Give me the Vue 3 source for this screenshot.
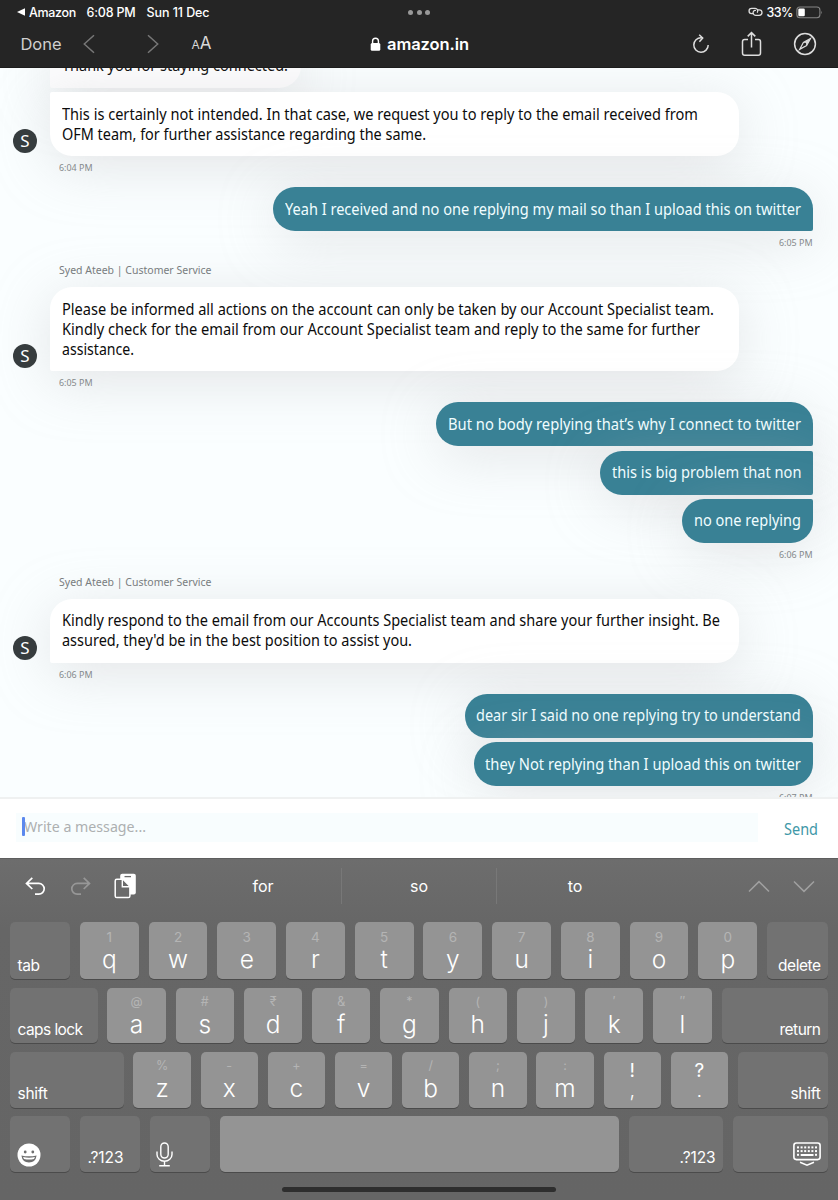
<script setup>
// Makes a line take the given width, by letter spacing or (.squeeze) by narrowing the glyphs.
const vFit = {
  mounted(el, { value, modifiers }) {
    if (!value) return
    const natural = el.getBoundingClientRect().width
    if (modifiers.squeeze) {
      el.style.transform = `scaleX(${value / natural})`
      el.style.marginRight = value - natural + 'px'
    } else {
      el.style.letterSpacing = (value - natural) / el.textContent.length + 'px'
    }
  },
}

const groups = [
  {
    from: 'agent',
    time: '6:04 PM',
    bubbles: [
      { shape: 'open', w: 251, lines: [['Thank you for staying connected.', 226]] },
      {
        shape: 'last',
        lines: [
          ['This is certainly not intended. In that case, we request you to reply to the email received from', 636],
          ['OFM team, for further assistance regarding the same.', 364],
        ],
      },
    ],
  },
  {
    from: 'me',
    time: '6:05 PM',
    bubbles: [{ shape: 'first', lines: [['Yeah I received and no one replying my mail so than I upload this on twitter', 516]] }],
  },
  {
    from: 'agent',
    name: 'Syed Ateeb | Customer Service',
    time: '6:05 PM',
    bubbles: [
      {
        shape: 'first',
        lines: [
          ['Please be informed all actions on the account can only be taken by our Account Specialist team.', 652],
          ['Kindly check for the email from our Account Specialist team and reply to the same for further', 638],
          ['assistance.', 72],
        ],
      },
    ],
  },
  {
    from: 'me',
    time: '6:06 PM',
    bubbles: [
      { shape: 'first', lines: [['But no body replying that’s why I connect to twitter', 353]] },
      { shape: 'mid', lines: [['this is big problem that non', 189.5]] },
      { shape: 'last', lines: [['no one replying', 107]] },
    ],
  },
  {
    from: 'agent',
    name: 'Syed Ateeb | Customer Service',
    time: '6:06 PM',
    bubbles: [
      {
        shape: 'first',
        lines: [
          ['Kindly respond to the email from our Accounts Specialist team and share your further insight. Be', 658],
          ["assured, they'd be in the best position to assist you.", 350],
        ],
      },
    ],
  },
  {
    from: 'me',
    time: '6:07 PM',
    bubbles: [
      { shape: 'first', lines: [['dear sir I said no one replying try to understand', 324.6]] },
      { shape: 'last', lines: [['they Not replying than I upload this on twitter', 315.8]] },
    ],
  },
]

const chars = (upper, lower) => [...lower].map((c, i) => ({ sub: [...upper][i], main: c }))
const rows = [
  {
    id: 'r1',
    keys: [{ label: 'tab', w: 60, t: 22 }, ...chars('1234567890', 'qwertyuiop'), { label: 'delete', w: 61, t: 42.5, right: true }],
  },
  {
    id: 'r2',
    keys: [{ label: 'caps lock', w: 87.5, t: 65 }, ...chars('@#₹&*()′″', 'asdfghjkl'), { label: 'return', w: 106.5, t: 41, right: true }],
  },
  {
    id: 'r3',
    keys: [
      { label: 'shift', w: 113.5, t: 30 },
      ...chars('%-+=/;:', 'zxcvbnm'),
      { sub: '!', main: ',', both: true },
      { sub: '?', main: '.', both: true },
      { label: 'shift', w: 90, t: 30, right: true },
    ],
  },
]
const dots = []
for (let r = 0; r < 3; r++)
  for (let c = 0; c < 6; c++) if (r < 2 || c === 0 || c === 5) dots.push([4 + c * 3.6, 4.4 + r * 3.7])
</script>

<template>
  <div class="screen">
    <header>
      <div class="status">
        <svg class="tri" width="8" height="8" viewBox="0 0 8 8"><path d="M0 4 8 .3v7.4z" fill="#fff" /></svg>
        <span v-fit="47" class="s-app">Amazon</span>
        <span v-fit="49" class="s-time">6:08 PM</span>
        <span v-fit="63" class="s-date">Sun 11 Dec</span>
        <span class="dots"><i></i><i></i><i></i></span>
        <svg class="link" width="15" height="10" viewBox="0 0 15 10" fill="none" stroke="#ddd" stroke-width="1.3" stroke-linecap="round">
          <path d="M5.2 6.6H3.7A2.6 2.6 0 0 1 3.7 1.3H7.2A2.6 2.6 0 0 1 9.4 5.2" />
          <path d="M9.6 2.8H11.2A2.8 2.8 0 0 1 11.2 8.4H7.8A2.7 2.7 0 0 1 5.6 4.1Q6.2 3.2 7.4 3.4" />
        </svg>
        <span v-fit="26.5" class="pct">33%</span>
        <svg class="batt" width="27" height="13" viewBox="0 0 27 13">
          <rect x=".9" y="1" width="23" height="10.8" rx="3" fill="none" stroke="#858585" stroke-width="1.1" />
          <rect x="2.3" y="2.5" width="6.5" height="7.8" rx="1.3" fill="#fff" />
          <path d="M25.2 4.7q1.5 1.7 0 3.5z" fill="#858585" />
        </svg>
      </div>
      <div class="toolbar">
        <span v-fit="41" class="done">Done</span>
        <svg class="back" width="12" height="20" viewBox="0 0 12 20"><path d="M11 1.2 1.3 10 11 18.8" /></svg>
        <svg class="fwd" width="12" height="20" viewBox="0 0 12 20"><path d="M1 1.2 10.7 10 1 18.8" /></svg>
        <span class="aa"><small>A</small>A</span>
        <svg class="lock" width="11" height="14" viewBox="0 0 11 14">
          <path d="M2.6 7V4.1a2.9 2.9 0 0 1 5.8 0V7" fill="none" stroke="#fff" stroke-width="1.4" />
          <rect x=".7" y="5.9" width="9.6" height="7.8" rx="1.5" fill="#fff" />
        </svg>
        <span v-fit="82" class="host">amazon.in</span>
        <svg class="reload" width="18" height="20" viewBox="0 0 18 20">
          <path d="M10.2 3.8H9.2A7.2 7.2 0 1 0 16.2 11" />
          <path d="M7.2 .7 10.7 4 7.4 7.7" />
        </svg>
        <svg class="share" width="21" height="26" viewBox="0 0 21 26">
          <path d="M7 8.5H3.7Q1.5 8.5 1.5 10.7V22Q1.5 24.3 3.7 24.3H17.3Q19.5 24.3 19.5 22V10.7Q19.5 8.5 17.3 8.5H14" />
          <path d="M10.5 16.5V1.8M6.7 5.4 10.5 1.6 14.3 5.4" />
        </svg>
        <svg class="compass" width="24" height="24" viewBox="0 0 24 24">
          <circle cx="12" cy="12" r="10.4" />
          <path d="M17.4 6.6 13.6 13.6 6.6 17.4 10.4 10.4z" stroke-width="1.2" />
          <path d="M17.6 6.4 10.4 10.4 13.6 13.6z" fill="#d6d6d6" stroke="none" />
          <circle cx="12" cy="12" r="1.2" fill="#252525" stroke="none" />
        </svg>
      </div>
    </header>

    <main>
      <section v-for="(g, i) in groups" :key="i" :class="['group', g.from]">
        <div v-if="g.name" v-fit.squeeze="152.5" class="name">{{ g.name }}</div>
        <div v-for="(b, j) in g.bubbles" :key="j" class="line">
          <span v-if="g.from === 'agent' && j === g.bubbles.length - 1" class="avatar">S</span>
          <div :class="['bubble', b.shape, { short: b.w }]">
            <div v-for="(l, k) in b.lines" :key="k" class="row"><span v-fit.squeeze="l[1]">{{ l[0] }}</span></div>
          </div>
        </div>
        <div class="time"><span v-fit.squeeze="33.5">{{ g.time }}</span></div>
      </section>
    </main>

    <div class="compose">
      <div class="field"><i class="caret"></i><span v-fit.squeeze="122">Write a message...</span></div>
      <span v-fit.squeeze="34" class="send">Send</span>
    </div>

    <div class="keyboard">
      <div class="suggest">
        <div class="tools">
          <svg width="21" height="21" viewBox="0 0 21 21" stroke="#fff"><path d="M7.3 1.8 1.5 7.4 7.3 13M2 7.4H13.8A5.4 5.4 0 0 1 13.8 18.2H10" /></svg>
          <svg width="21" height="21" viewBox="0 0 21 21" stroke="#979797"><path d="M13.7 1.8 19.5 7.4 13.7 13M19 7.4H7.2A5.4 5.4 0 0 0 7.2 18.2H11" /></svg>
          <svg class="paste" width="23" height="26" viewBox="0 0 23 26">
            <rect x="6.2" y=".8" width="15.6" height="20.6" rx="2" fill="#fff" />
            <path d="M10.5 3.6h6.5" stroke="#6b6b6b" stroke-width="1.3" />
            <path d="M2.8 6.3H9L15.9 13.2V23Q15.9 24.6 14.3 24.6H2.8Q1.2 24.6 1.2 23V7.9Q1.2 6.3 2.8 6.3z" fill="#6b6b6b" stroke="#fff" stroke-width="1.5" />
            <path d="M8.3 6.3V13.8H15.9" fill="none" stroke="#fff" stroke-width="1.4" />
          </svg>
        </div>
        <span class="word">for</span>
        <span class="word mid-word">so</span>
        <span class="word">to</span>
        <div class="nav">
          <svg width="22" height="13" viewBox="0 0 22 13"><path d="M1 11.5 11 1.6 21 11.5" /></svg>
          <svg width="22" height="13" viewBox="0 0 22 13"><path d="M1 1.5 11 11.4 21 1.5" /></svg>
        </div>
      </div>
      <div v-for="r in rows" :key="r.id" :class="['keys', r.id]">
        <div
          v-for="(k, i) in r.keys"
          :key="i"
          :class="['key', { dark: k.label, right: k.right, both: k.both }]"
          :style="k.w ? { flex: '0 0 ' + k.w + 'px' } : null"
        >
          <span v-if="k.label" v-fit="k.t" class="label">{{ k.label }}</span>
          <template v-else><span class="sub">{{ k.sub }}</span><span class="main">{{ k.main }}</span></template>
        </div>
      </div>
      <div class="keys r4">
        <div class="key dark k60">
          <svg class="emoji" width="24" height="24" viewBox="0 0 24 24">
            <circle cx="12" cy="12" r="11.5" fill="#fff" />
            <circle cx="8.2" cy="9" r="1.4" fill="#6e6e6e" /><circle cx="15.8" cy="9" r="1.4" fill="#6e6e6e" />
            <path d="M4.4 12.4Q12 14.3 19.6 12.4 18.6 19.4 12 19.4 5.4 19.4 4.4 12.4z" fill="#6e6e6e" />
            <path d="M6 14Q12 15.4 18 14L17 16Q12 17 7 16z" fill="#fff" />
          </svg>
        </div>
        <div class="key dark k60"><span v-fit="36" class="label">.?123</span></div>
        <div class="key dark k60">
          <svg class="mic" width="17" height="25" viewBox="0 0 17 25" fill="none" stroke="#fff" stroke-width="1.4">
            <rect x="4.8" y="1" width="7.4" height="15" rx="3.7" />
            <path d="M1 9.5V12.5A7.5 6.8 0 0 0 16 12.5V9.5M8.5 19.5V23.8M3.2 23.8H13.8" />
          </svg>
        </div>
        <div class="key space"></div>
        <div class="key dark right k94"><span v-fit="36" class="label">.?123</span></div>
        <div class="key dark right k95">
          <svg class="hide" width="28" height="25" viewBox="0 0 28 25">
            <rect x=".9" y="1" width="26.2" height="16.6" rx="2.5" fill="none" stroke="#fff" stroke-width="1.6" />
            <rect v-for="(d, i) in dots" :key="i" :x="d[0]" :y="d[1]" width="2" height="2" fill="#fff" />
            <rect x="7.7" y="12" width="12.8" height="2" fill="#fff" />
            <path d="M7 20.3 14 23.3 21 20.3" fill="none" stroke="#fff" stroke-width="1.5" />
          </svg>
        </div>
      </div>
      <div class="home"></div>
    </div>
  </div>
</template>

<style>
body { margin: 0; }
</style>

<style scoped>
.screen { width: 838px; height: 1200px; overflow: hidden; display: flex; flex-direction: column; background: #fff; font-family: "Noto Sans", sans-serif; }
.screen * { box-sizing: border-box; }
svg { display: block; flex: none; }
span { white-space: nowrap; flex: none; }
header { position: relative; z-index: 2; height: 68px; flex: none; background: #252525; color: #fff; font-family: Inter, sans-serif; border-bottom: 1px solid #1c1c1c; }
.status { height: 24px; display: flex; align-items: center; font-size: 12.5px; font-weight: 500; padding-left: 16.5px; }
.s-app { margin-left: 4.5px; }
.s-time { margin-left: 10.5px; }
.s-date { margin-left: 11px; }
.dots { display: flex; gap: 3.5px; margin-left: 198.5px; }
.dots i { width: 5px; height: 5px; border-radius: 50%; background: #999; }
.link { margin-left: 317.5px; }
.pct { margin-left: 4px; }
.batt { margin-left: 2.5px; }
.toolbar { height: 39px; display: flex; align-items: center; font-size: 17px; padding-left: 20.5px; }
.done { color: #cfcfcf; font-weight: 400; font-size: 16.5px; }
.toolbar svg { fill: none; stroke: #dedede; stroke-width: 1.5; }
.toolbar .back, .toolbar .fwd { stroke: #777; stroke-width: 1.5; }
.back { margin-left: 21px; }
.fwd { margin-left: 52px; }
.aa { margin-left: 33px; width: 21px; color: #d8d8d8; font-size: 17px; line-height: 20px; padding-top: 1px; }
.aa small { font-size: 12px; }
.toolbar .lock { margin-left: 157.5px; stroke: none; }
.host { margin-left: 6px; font-weight: 600; font-size: 16.5px; }
.reload { margin-left: 223px; }
.share { margin-left: 31px; }
.compass { margin-left: 31px; }

main { height: 729px; flex: none; overflow: hidden; background: #fafeff; }
.group:first-child { margin-top: -24px; }
.group { display: flex; flex-direction: column; padding: 0 25px 0 50px; }
.name { align-self: flex-start; transform-origin: 0 50%; margin: 6px 0 6.3px 9px; line-height: 22px; font-size: 11px; color: #757a7c; white-space: nowrap; }
.line { display: flex; position: relative; }
.line + .line { margin-top: 4.2px; }
.me .line { justify-content: flex-end; }
.avatar { position: absolute; left: -37px; bottom: 3.5px; z-index: 1; width: 24px; height: 24px; border-radius: 50%; background: #363c3e; color: #fff; font-size: 17px; line-height: 24px; text-align: center; }
.bubble { padding: 12.4px 12px 11.6px 11.7px; font-size: 15.4px; line-height: 20px; box-shadow: 0 10px 56px rgba(186, 184, 186, 0.36); }
.row { height: 20px; white-space: nowrap; }
.row span, .time span, .field span, .send { display: inline-block; transform-origin: 0 50%; }
.agent .bubble { width: 688.5px; background: #fff; color: #0c0c0c; }
.agent .short { width: 251px; background: #fcfcfd; }
.agent .open { border-radius: 22px 22px 22px 2px; }
.agent .last { border-radius: 2px 22px 22px 22px; }
.agent .first { border-radius: 22px 22px 22px 2px; }
.me .bubble { background: #398195; color: #f0fdff; }
.me .first { border-radius: 22px 22px 2px 22px; }
.me .mid { border-radius: 22px 2px 2px 22px; }
.me .last { border-radius: 22px 2px 22px 22px; }
.time { position: relative; height: 31px; line-height: 23px; font-size: 9px; color: #85898b; padding-left: 9px; }
.me .time { height: 22px; text-align: right; padding-right: 0.7px; }

.compose { height: 61px; flex: none; position: relative; z-index: 1; background: #fff; border-top: 2px solid #eff1f1; display: flex; align-items: flex-start; padding: 14px 20px 0 16px; }
.field { width: 742px; height: 29px; background: #f8fdfe; display: flex; align-items: center; font-size: 15.2px; color: #adb0b1; padding: 0 0 3px 6px; }
.caret { width: 3px; height: 19px; border-radius: 1px; background: #5b88ee; margin-right: -1px; position: relative; z-index: 1; }
.send { margin-left: 26px; color: #3f98a8; font-size: 15.5px; line-height: 32px; }

.keyboard { flex: 1; background: linear-gradient(#6d6d6d, #666 70px, #656565); font-family: Inter, sans-serif; color: #fff; border-top: 1px solid #5e5e5e; }
.suggest { height: 62.5px; display: flex; padding-top: 9px; }
.tools { width: 185px; height: 36px; display: flex; align-items: center; padding-left: 24.5px; gap: 24px; }
.tools svg { fill: none; stroke-width: 1.7; }
.tools .paste { stroke-width: 1; margin-left: -0.7px; }
.word { width: 156px; height: 36px; line-height: 36px; text-align: center; font-size: 16px; }
.mid-word { border: solid #787878; border-width: 0 1px; }
.nav { display: flex; margin-left: 94.5px; gap: 23px; height: 36px; align-items: center; }
.nav svg { fill: none; stroke: #a0a0a0; stroke-width: 1.5; }
.keys { display: flex; gap: 9.9px; padding: 0 10px; height: 55.5px; margin-bottom: 8.8px; }
.r1 { height: 57.5px; }
.key { flex: 1 1 0; min-width: 0; border-radius: 5px; background: #949494; box-shadow: 0 1px 0.5px #4b4b4b; display: flex; flex-direction: column; align-items: center; padding-top: 4px; }
.r1 .key { padding-top: 5px; }
.dark { background: #727272; align-items: flex-start; justify-content: flex-end; padding: 0 7.5px 3.5px; }
.right { align-items: flex-end; }
.label { font-size: 15.5px; line-height: 20px; }
.sub { font-size: 12.5px; line-height: 20px; color: #b4b4b4; font-weight: 400; }
.r1 .sub { font-size: 13.5px; }
.main { font-size: 24.5px; line-height: 26px; font-weight: 350; margin-top: -0.7px; }
.both .sub { font-size: 19px; color: #fff; line-height: 20px; padding-top: 5px; }
.both .main { font-size: 20px; line-height: 18px; margin-top: 0; }
.k60 { flex: 0 0 60px; }
.k94 { flex: 0 0 94.5px; }
.k95 { flex: 0 0 95px; }
.r4 { margin-bottom: 0; }
.emoji { margin: 0 0 1px -1px; }
.mic { margin: 0 0 1px -1px; }
.hide { margin: 0 0 1px; }
.home { width: 274px; height: 5px; border-radius: 3px; background: #2e2e2e; margin: 15px auto 0; }
</style>
